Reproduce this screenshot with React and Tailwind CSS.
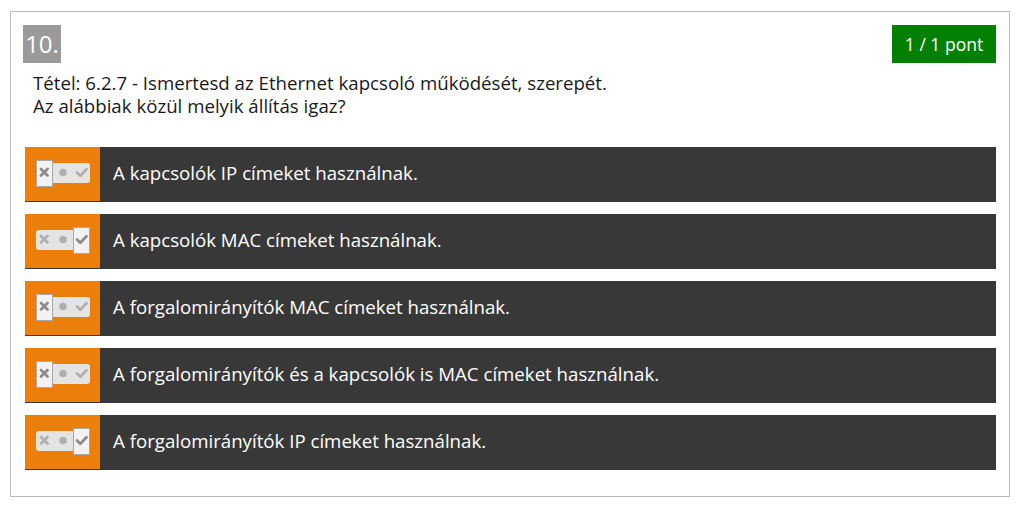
const answers = [
  { text: "A kapcsolók IP címeket használnak.", pick: "x" },
  { text: "A kapcsolók MAC címeket használnak.", pick: "check" },
  { text: "A forgalomirányítók MAC címeket használnak.", pick: "x" },
  { text: "A forgalomirányítók és a kapcsolók is MAC címeket használnak.", pick: "x" },
  { text: "A forgalomirányítók IP címeket használnak.", pick: "check" },
];

function Toggle({ pick }) {
  const boxX = pick === "x" ? 0.5 : 37.5;
  return (
    <svg width="54" height="28" viewBox="0 0 54 28">
      <rect x="0" y="3" width="54" height="20" rx="3" fill="#e4e4e4" />
      <rect x={boxX} y="0.5" width="16" height="26" fill="#f2f2f2" stroke="#a8a8a8" strokeWidth="1" />
      <g stroke={pick === "x" ? "#8c8c8c" : "#b0b0b0"} strokeWidth="2.8" strokeLinecap="round">
        <line x1="5" y1="9" x2="11.5" y2="15.5" />
        <line x1="11.5" y1="9" x2="5" y2="15.5" />
      </g>
      <circle cx="27" cy="12.5" r="3.8" fill="#b0b0b0" />
      <path
        d="M41 12.5 L44.3 15.8 L50.5 9.3"
        fill="none"
        stroke={pick === "check" ? "#8c8c8c" : "#b0b0b0"}
        strokeWidth="2.8"
        strokeLinecap="round"
        strokeLinejoin="round"
      />
    </svg>
  );
}

export default function App() {
  return (
    <div className="bg-white w-[1036px] h-[505px] pt-[11px] pl-[10px]" style={{ fontFamily: '"Open Sans", sans-serif' }}>
      <div className="w-[1000px] h-[486px] border border-[#bbbbbb] pl-[12px] pr-[13px] pt-[13px]">
        <div className="flex justify-between items-start">
          <div className="h-[38px] w-[38px] bg-[#9a9a9a] text-white text-[24px] leading-[38px] text-center">10.</div>
          <div className="h-[38px] w-[104px] bg-[#008000] text-white text-[17.5px] leading-[38px] text-center">1 / 1 pont</div>
        </div>
        <div className="pl-[10px] mt-[8px] text-[18.67px] leading-[23px] text-[#1a1a1a]">
          <p>Tétel: 6.2.7 - Ismertesd az Ethernet kapcsoló működését, szerepét.</p>
          <p>Az alábbiak közül melyik állítás igaz?</p>
        </div>
        <div className="mt-[30px] ml-[2px] flex flex-col gap-[12px]">
          {answers.map((a) => (
            <div key={a.text} className="flex h-[55px] bg-[#383838]">
              <div className="w-[75px] h-[54px] bg-[#eb7f0a] flex items-center justify-center pl-[1px]">
                <Toggle pick={a.pick} />
              </div>
              <div className="flex items-center pl-[13px] pb-[4px] text-white text-[18.67px]">{a.text}</div>
            </div>
          ))}
        </div>
      </div>
    </div>
  );
}
